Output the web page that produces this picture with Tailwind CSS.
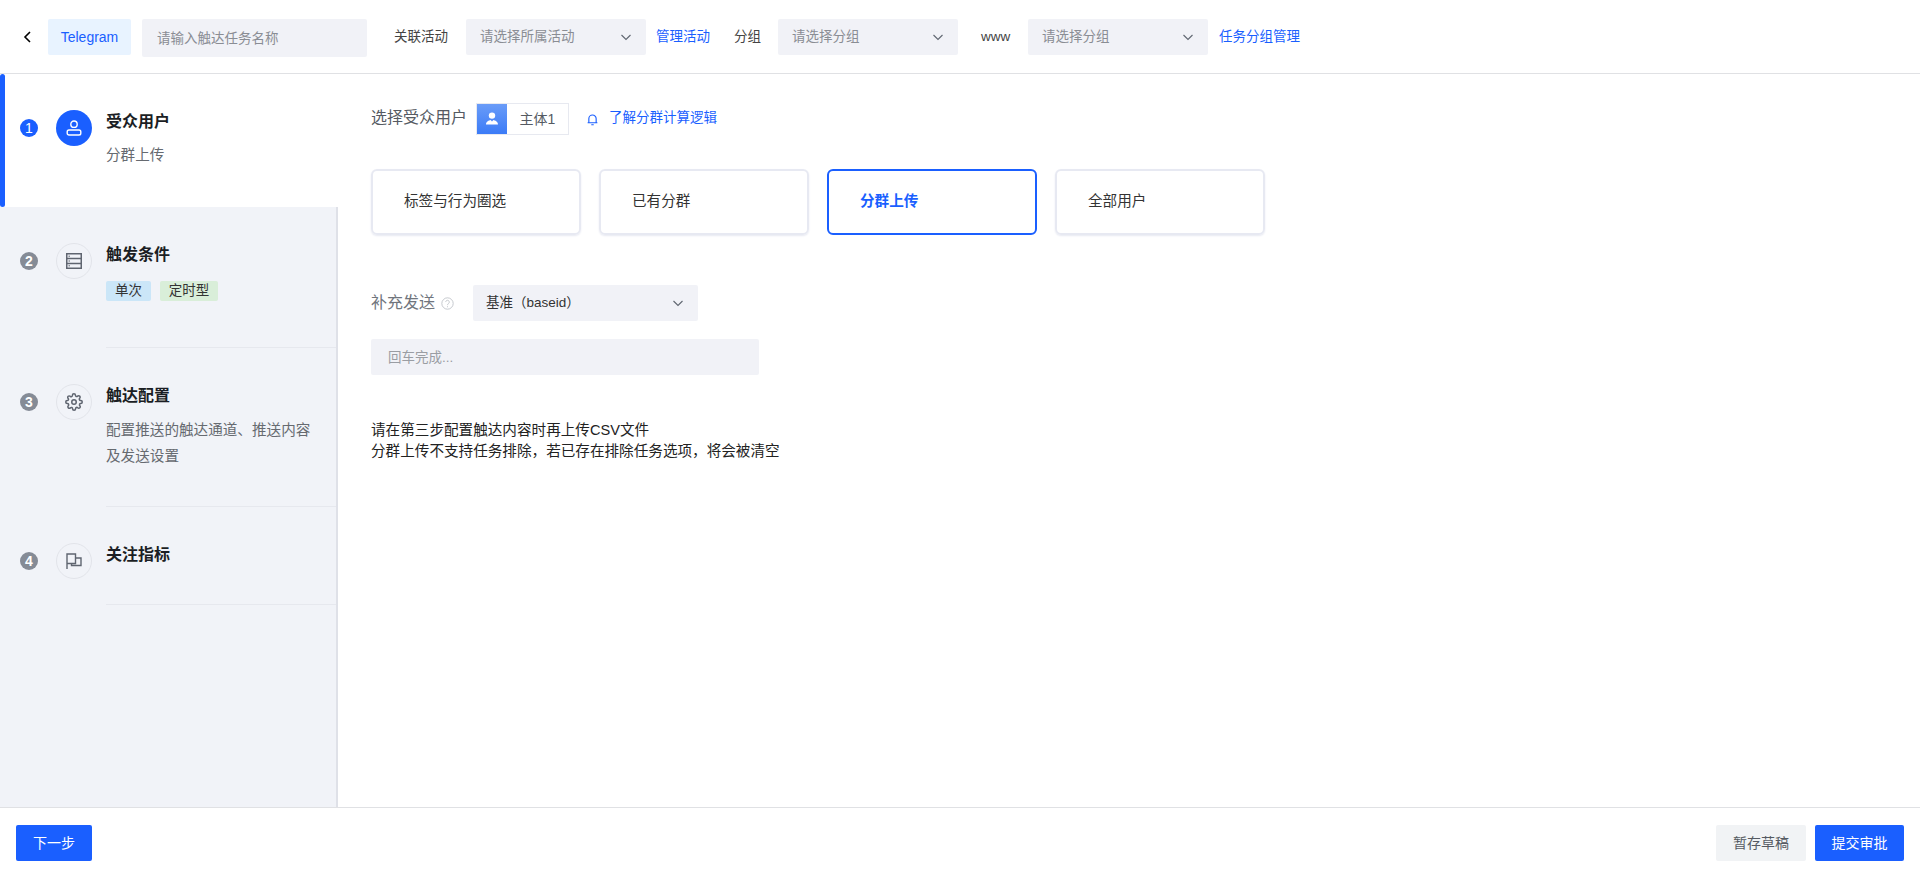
<!DOCTYPE html>
<html lang="zh-CN">
  <head>
    <meta charset="UTF-8" />
    <title>新建触达任务</title>
    <script src="https://cdn.jsdelivr.net/npm/@tailwindcss/browser@4"></script>
  </head>

  <body class="bg-white font-['Liberation_Sans','Noto_Sans_CJK_SC',sans-serif] text-[14.6px] text-[#333]">
    <div class="flex flex-col h-[878px] overflow-hidden">
      <!-- header -->
      <header class="flex items-start h-[74px] shrink-0 border-b border-[#e0e1e4] pt-[19px] text-[13.5px]">
        <button class="ml-[20px] mt-[10px] w-4 h-4 text-black">
          <svg viewBox="0 0 16 16" class="w-4 h-4" fill="none" stroke="currentColor" stroke-width="1.6"><path d="M10 3 L5 8 L10 13" /></svg>
        </button>
        <div class="ml-[12px] w-[83px] h-9 rounded-[2px] bg-[#e8f3ff] text-sm text-[#1a5fff] flex items-center justify-center">Telegram</div>
        <input class="ml-[11px] w-[225px] h-[38px] rounded-[2px] bg-[#f1f2f7] px-[15px] placeholder:text-[#8a8d94] outline-none" placeholder="请输入触达任务名称" />
        <span class="ml-[27px] w-[72px] h-9 leading-9 text-[#444]">关联活动</span>
        <div class="w-[180px] h-9 rounded-[2px] bg-[#f1f2f7] pl-[14px] pr-[14px] flex items-center justify-between text-[#8a8d94]">
          <span>请选择所属活动</span>
          <svg viewBox="0 0 12 12" class="w-3 h-3 text-[#5f6570]" fill="none" stroke="currentColor" stroke-width="1.1"><path d="M1.5 4 L6 8.5 L10.5 4" /></svg>
        </div>
        <a class="ml-[10px] h-9 leading-9 text-[#1a5fff]">管理活动</a>
        <span class="ml-[24px] w-[44px] h-9 leading-9 text-[#444]">分组</span>
        <div class="w-[180px] h-9 rounded-[2px] bg-[#f1f2f7] pl-[14px] pr-[14px] flex items-center justify-between text-[#8a8d94]">
          <span>请选择分组</span>
          <svg viewBox="0 0 12 12" class="w-3 h-3 text-[#5f6570]" fill="none" stroke="currentColor" stroke-width="1.1"><path d="M1.5 4 L6 8.5 L10.5 4" /></svg>
        </div>
        <span class="ml-[23px] w-[47px] h-9 leading-9 text-[#444]">www</span>
        <div class="w-[180px] h-9 rounded-[2px] bg-[#f1f2f7] pl-[14px] pr-[14px] flex items-center justify-between text-[#8a8d94]">
          <span>请选择分组</span>
          <svg viewBox="0 0 12 12" class="w-3 h-3 text-[#5f6570]" fill="none" stroke="currentColor" stroke-width="1.1"><path d="M1.5 4 L6 8.5 L10.5 4" /></svg>
        </div>
        <a class="ml-[11px] h-9 leading-9 text-[#1a5fff]">任务分组管理</a>
      </header>

      <div class="flex flex-1 min-h-0">
        <!-- steps -->
        <aside class="w-[338px] shrink-0 flex flex-col">
          <div class="relative flex pl-5 h-[133px] bg-white">
            <div class="absolute left-0 top-0 w-[5px] h-[133px] rounded-[3px] bg-[#1a5fff]"></div>
            <div class="mt-[45px] w-[18px] h-[18px] rounded-full bg-[#1a5fff] text-white text-sm flex items-center justify-center">1</div>
            <div class="ml-[18px] mt-9 w-9 h-9 rounded-full bg-[#1a5fff] text-white flex items-center justify-center">
              <svg viewBox="0 0 16 16" class="w-4 h-4" fill="none" stroke="currentColor" stroke-width="1.4"><circle cx="8" cy="4.2" r="3.2" /><rect x="1.2" y="10" width="13.6" height="5" rx="1.8" /></svg>
            </div>
            <div class="ml-[14px] pt-9">
              <div class="text-base font-bold leading-6 text-[#1b1e24]">受众用户</div>
              <div class="mt-[11px] leading-5 text-[#666a70]">分群上传</div>
            </div>
          </div>

          <div class="flex-1 bg-[#f1f3f8] border-r-2 border-[#dfe1e8]">
            <div class="flex pl-5 h-[141px]">
              <div class="mt-[45px] w-[18px] h-[18px] rounded-full bg-[#858b96] text-white text-sm font-bold flex items-center justify-center">2</div>
              <div class="ml-[18px] mt-9 w-9 h-9 rounded-full border border-[#e2e4ea] text-[#5f6570] flex items-center justify-center">
                <svg viewBox="0 0 16 16" class="w-4 h-4" fill="none" stroke="currentColor" stroke-width="1.5"><rect x="0.75" y="0.75" width="14.5" height="14.5" /><path d="M1 5.6 H15 M1 10.4 H15" /><path d="M2.5 3.2 H4 M2.5 8 H4 M2.5 12.8 H4" stroke-width="1" /></svg>
              </div>
              <div class="ml-[14px] flex-1 pt-9 border-b border-[#e6e8ee]">
                <div class="text-base font-bold leading-6 text-[#1b1e24]">触发条件</div>
                <div class="mt-[14px] flex gap-[9px] text-[13.5px]">
                  <span class="w-[45px] h-5 rounded-[2px] bg-[#cbe6f8] flex items-center justify-center">单次</span>
                  <span class="w-[58px] h-5 rounded-[2px] bg-[#d9eed9] flex items-center justify-center">定时型</span>
                </div>
              </div>
            </div>

            <div class="flex pl-5 h-[159px]">
              <div class="mt-[45px] w-[18px] h-[18px] rounded-full bg-[#858b96] text-white text-sm font-bold flex items-center justify-center">3</div>
              <div class="ml-[18px] mt-9 w-9 h-9 rounded-full border border-[#e2e4ea] text-[#5f6570] flex items-center justify-center">
                <svg viewBox="0 0 24 24" class="w-[18px] h-[18px]" fill="none" stroke="currentColor" stroke-width="2"><circle cx="12" cy="12" r="3" /><path d="M19.4 15a1.65 1.65 0 0 0 .33 1.82l.06.06a2 2 0 1 1-2.83 2.83l-.06-.06a1.65 1.65 0 0 0-2.8 1.17V21a2 2 0 1 1-4 0v-.09a1.65 1.65 0 0 0-2.8-1.17l-.06.06a2 2 0 1 1-2.83-2.83l.06-.06a1.65 1.65 0 0 0-1.17-2.8H3a2 2 0 1 1 0-4h.09a1.65 1.65 0 0 0 1.17-2.8l-.06-.06a2 2 0 1 1 2.83-2.83l.06.06a1.65 1.65 0 0 0 2.8-1.17V3a2 2 0 1 1 4 0v.09a1.65 1.65 0 0 0 2.8 1.17l.06-.06a2 2 0 1 1 2.83 2.83l-.06.06a1.65 1.65 0 0 0 1.17 2.8H21a2 2 0 1 1 0 4h-.09a1.65 1.65 0 0 0-1.51 1.11z" /></svg>
              </div>
              <div class="ml-[14px] flex-1 pt-9 border-b border-[#e6e8ee]">
                <div class="text-base font-bold leading-6 text-[#1b1e24]">触达配置</div>
                <div class="mt-[9px] leading-[26px] text-[#666a70]">配置推送的触达通道、推送内容<br />及发送设置</div>
              </div>
            </div>

            <div class="flex pl-5 h-[98px]">
              <div class="mt-[45px] w-[18px] h-[18px] rounded-full bg-[#858b96] text-white text-sm font-bold flex items-center justify-center">4</div>
              <div class="ml-[18px] mt-9 w-9 h-9 rounded-full border border-[#e2e4ea] text-[#5f6570] flex items-center justify-center">
                <svg viewBox="0 0 16 16" class="w-4 h-4" fill="none" stroke="currentColor" stroke-width="1.4"><path d="M1 16 V1 H9.5 V10.5 H1 M9.5 5 H15 V12.5 H5.5 V10.5" /></svg>
              </div>
              <div class="ml-[14px] flex-1 pt-9 border-b border-[#e6e8ee]">
                <div class="text-base font-bold leading-6 text-[#1b1e24]">关注指标</div>
              </div>
            </div>
          </div>
        </aside>

        <!-- form -->
        <main class="flex-1 pl-[33px] pt-[29px]">
          <div class="flex items-center h-8">
            <span class="text-base text-[#555a62] w-[105px] -mt-[2px]">选择受众用户</span>
            <div class="flex w-[93px] h-8 border border-[#e7e9f0]">
              <div class="w-[30px] bg-[linear-gradient(180deg,#6a9cf8,#3b7bf7)] flex items-center justify-center">
                <svg viewBox="0 0 16 16" class="w-4 h-4" fill="#fff"><circle cx="8" cy="4.6" r="3.2" /><path d="M2 13.5 C2 10.5 5 9.5 6.6 9 L8 10.4 L9.4 9 C11 9.5 14 10.5 14 13.5 Z" /></svg>
              </div>
              <span class="flex-1 flex items-center justify-center text-sm text-[#555a62]">主体1</span>
            </div>
            <svg viewBox="0 0 16 16" class="ml-[17px] w-[13px] h-[13px] text-[#1a5fff]" fill="none" stroke="currentColor" stroke-width="1.4"><path d="M3.5 12 V7 a4.5 4.5 0 0 1 9 0 V12 M2 12 H14 M6.5 14.5 H9.5" /></svg>
            <a class="ml-[10px] text-[13.5px] text-[#1a5fff] -mt-px">了解分群计算逻辑</a>
          </div>

          <div class="flex gap-[18px] mt-[34px]">
            <div class="w-[210px] h-[66px] rounded-md border-2 border-[#e7e9f2] shadow-[0_1px_2px_#e7e9f2] flex items-center pl-[31px] text-[#333]">标签与行为圈选</div>
            <div class="w-[210px] h-[66px] rounded-md border-2 border-[#e7e9f2] shadow-[0_1px_2px_#e7e9f2] flex items-center pl-[31px] text-[#333]">已有分群</div>
            <div class="w-[210px] h-[66px] rounded-md border-2 border-[#1a5fff] flex items-center pl-[31px] text-[#1a5fff] font-bold">分群上传</div>
            <div class="w-[210px] h-[66px] rounded-md border-2 border-[#e7e9f2] shadow-[0_1px_2px_#e7e9f2] flex items-center pl-[31px] text-[#333]">全部用户</div>
          </div>

          <div class="flex items-center mt-[50px] h-9">
            <span class="text-base text-[#70757d] w-[64px]">补充发送</span>
            <svg viewBox="0 0 16 16" class="ml-[6px] w-[13px] h-[13px] text-[#c4c7cd]" fill="none" stroke="currentColor" stroke-width="1.2"><circle cx="8" cy="8" r="7" /><path d="M5.8 6.2 a2.2 2.2 0 1 1 3.4 1.9 c-.8.5-1.2.9-1.2 1.9 M8 11.4 V12.6" /></svg>
            <div class="ml-[19px] w-[225px] h-9 rounded-[2px] bg-[#f1f2f7] pl-[13px] pr-[14px] flex items-center justify-between text-[13.5px]">
              <span>基准（baseid）</span>
              <svg viewBox="0 0 12 12" class="w-3 h-3 text-[#5f6570]" fill="none" stroke="currentColor" stroke-width="1.1"><path d="M1.5 4 L6 8.5 L10.5 4" /></svg>
            </div>
          </div>

          <input class="block mt-[18px] w-[388px] h-9 rounded-[2px] bg-[#f1f2f7] px-[17px] text-[13.5px] placeholder:text-[#9a9da3] outline-none" placeholder="回车完成..." />

          <p class="mt-[45px] leading-[21px] text-[#222]">请在第三步配置触达内容时再上传CSV文件<br />分群上传不支持任务排除，若已存在排除任务选项，将会被清空</p>
        </main>
      </div>

      <!-- footer -->
      <footer class="h-[71px] shrink-0 border-t border-[#e0e1e4] flex items-center justify-between pl-4 pr-4 text-sm">
        <button class="w-[76px] h-9 rounded-[2px] bg-[#1a5fff] text-white">下一步</button>
        <div class="flex gap-[9px]">
          <button class="w-[90px] h-9 rounded-[2px] bg-[#f1f3f5] text-[#555a62]">暂存草稿</button>
          <button class="w-[89px] h-9 rounded-[2px] bg-[#1a5fff] text-white">提交审批</button>
        </div>
      </footer>
    </div>
  </body>
</html>
